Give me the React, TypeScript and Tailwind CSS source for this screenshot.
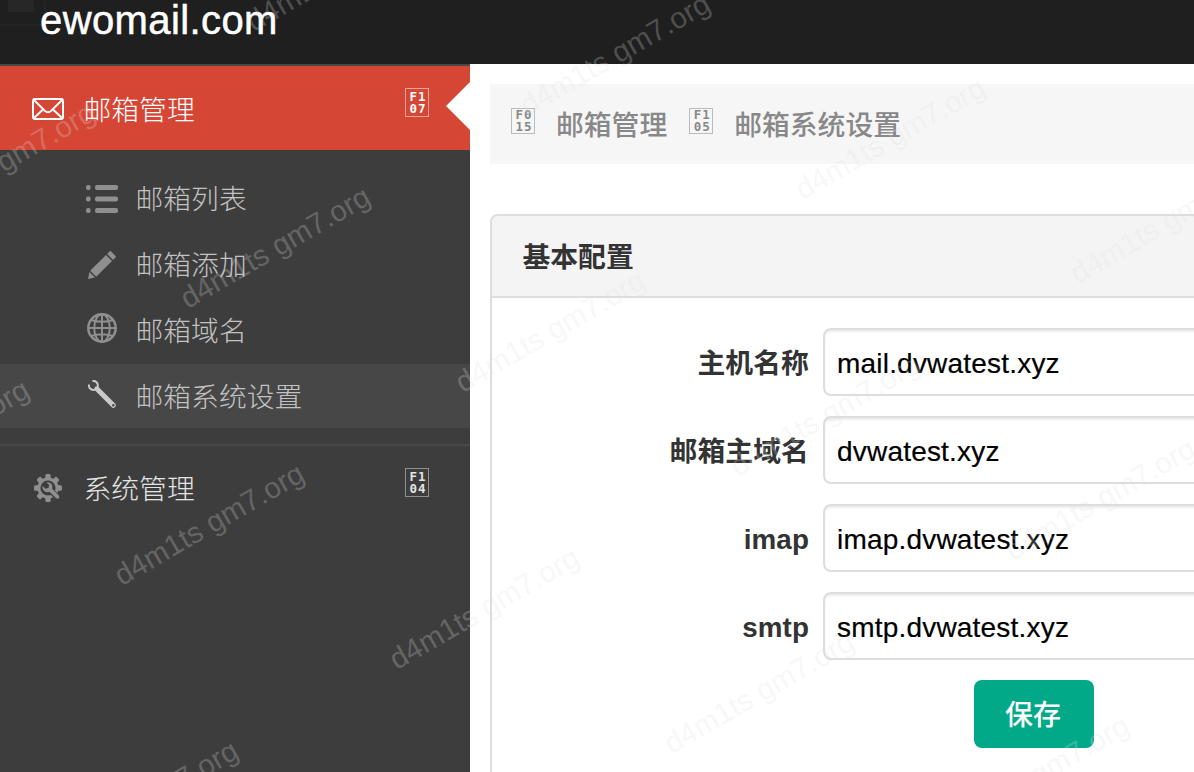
import type { ReactNode } from "react";

type HexProps = { top: string; bottom: string; className?: string };

function HexBox({ top, bottom, className = "" }: HexProps) {
  return (
    <span
      className={`flex w-6 shrink-0 flex-col items-center justify-center border pl-[2px] font-['DejaVu_Sans_Mono'] text-[12.5px] leading-[12px] font-bold tracking-[1px] ${className}`}
    >
      <span>{top}</span>
      <span>{bottom}</span>
    </span>
  );
}

function EnvelopeIcon() {
  return (
    <svg width="32" height="22" viewBox="0 0 32 22" fill="none" stroke="#fff" strokeWidth="2">
      <rect x="1" y="1" width="30" height="20" rx="2" />
      <path d="M2 2l11 11q3 2.400 6 0L30 2M2 20l9-8.500M30 20l-9-8.500" strokeWidth="1.900" />
    </svg>
  );
}

function ListIcon() {
  return (
    <svg width="32" height="28" viewBox="0 0 32 28" fill="#8f8f8f">
      {[0, 11.5, 23].map((y) => (
        <g key={y}>
          <rect x="0" y={y} width="4.600" height="5" rx="2" />
          <rect x="9" y={y} width="23" height="5" rx="2" />
        </g>
      ))}
    </svg>
  );
}

function PencilIcon() {
  return (
    <svg width="28" height="28" viewBox="0 0 28 28" fill="#8f8f8f">
      <path d="M21.500 .5Q22.300-.3 23.200.6L27.500 4.900Q28.300 5.700 27.500 6.500L25.100 8.900 19.100 2.900Z" />
      <path d="M18 4L24 10 8.200 25.800 2.200 19.800Z" />
      <path d="M1.400 21L7 26.500 0 28Z" />
    </svg>
  );
}

function GlobeIcon() {
  return (
    <svg width="30" height="30" viewBox="0 0 30 30" fill="none" stroke="#8f8f8f" strokeWidth="2">
      <circle cx="15" cy="15" r="13.700" strokeWidth="2.500" />
      <ellipse cx="15" cy="15" rx="7.800" ry="13.800" />
      <path d="M15 1v28M1 15h28M4 7q11 3.600 22 0M4 23q11-3.600 22 0" />
    </svg>
  );
}

function WrenchIcon() {
  return (
    <svg width="28" height="28" viewBox="0 0 28 28" fill="none" stroke="#c9c9c9">
      <path d="M.9 5.200A4.500 4.500 0 1 0 5.300 .9" strokeWidth="2" strokeLinecap="round" />
      <path d="M8.800 8.800L25.300 25.300" strokeWidth="5" strokeLinecap="round" />
      <circle cx="25.300" cy="25.300" r="1.200" fill="#474747" stroke="none" />
    </svg>
  );
}

function GearIcon() {
  return (
    <svg width="28" height="28" viewBox="0 0 28 28">
      <g fill="#8f8f8f">
        <circle cx="14" cy="14" r="10.600" />
        {[0, 45, 90, 135, 180, 225, 270, 315].map((a) => (
          <rect key={a} x="11.300" y="0" width="5.400" height="6" rx="1.500" transform={`rotate(${a} 14 14)`} />
        ))}
      </g>
      <circle cx="14" cy="14" r="7.600" fill="#3d3d3d" />
      <path d="M17 17L23.500 23.500" stroke="#3d3d3d" strokeWidth="6" strokeLinecap="round" />
      <path
        d="M12.300 8.300C16.500 7.300 19.500 11 18 14.600L25 21.700Q26.300 24.700 22.900 24.700L15.300 17.800C11.500 19.200 7.600 16 8.600 12L11.500 14.700 14.600 13.700 15.200 11Z"
        fill="#8f8f8f"
      />
    </svg>
  );
}

type SubItemProps = { icon: ReactNode; label: string; active?: boolean };

function SubItem({ icon, label, active }: SubItemProps) {
  return (
    <li className={`flex h-16 items-center pl-[84px] text-[#c2c2c2] ${active ? "bg-[#474747]" : ""}`}>
      <span className="flex w-9 items-center justify-center">{icon}</span>
      <span className="ml-[15.500px] pt-[3px] text-[27.8px] leading-10 font-light">{label}</span>
    </li>
  );
}

const fields = [
  { label: "主机名称", value: "mail.dvwatest.xyz" },
  { label: "邮箱主域名", value: "dvwatest.xyz" },
  { label: "imap", value: "imap.dvwatest.xyz" },
  { label: "smtp", value: "smtp.dvwatest.xyz" },
];

const marks = [
  [341, -31], [615, 53], [890, 137], [1165, 221],
  [0, 162], [275, 246], [550, 330], [825, 414], [1100, 498],
  [-66, 439], [209, 523], [484, 607], [759, 691], [1034, 775],
  [143, 800],
];

function Watermark() {
  return (
    <div className="pointer-events-none absolute inset-0 overflow-hidden">
      {marks.map(([x, y]) => (
        <span
          key={`${x},${y}`}
          className="absolute -translate-x-1/2 -translate-y-1/2 -rotate-30 text-[29.5px] leading-none whitespace-nowrap text-[#e0e0e0]/25"
          style={{ left: x, top: y + 1 }}
        >
          d4m1ts gm7.org
        </span>
      ))}
    </div>
  );
}

export default function App() {
  return (
    <div className="relative flex h-[772px] w-[1194px] flex-col overflow-hidden bg-white font-['Liberation_Sans','Noto_Sans_CJK_SC',sans-serif]">
      <header className="relative h-16 shrink-0 bg-[#1f1f1f]">
        <div className="absolute top-0 left-0 h-[26px] w-[46px] border-r-2 border-b-2 border-[#242424] pl-2">
          <div className="h-3 w-[26px] bg-[#272727]" />
        </div>
        <div className="relative pl-10 text-[40px] leading-10 tracking-[0.4px] text-white [-webkit-text-stroke:0.5px_#fff]">
          ewomail.com
        </div>
      </header>

      <div className="flex min-h-0 flex-1">
        <aside className="w-[470px] shrink-0 border-t-2 border-[#484848] bg-[#3d3d3d]">
          <div className="relative flex h-[84px] items-center bg-[#d64635] pr-[41px] pl-8 text-white">
            <span className="mt-0.5 w-8"><EnvelopeIcon /></span>
            <span className="ml-[19.500px] flex-1 pt-[5px] text-[27.8px] leading-10 font-light">邮箱管理</span>
            <HexBox top="F1" bottom="07" className="mb-[11px] h-[29px] border-white/50" />
            <svg className="absolute top-4 right-0" width="24" height="48" viewBox="0 0 24 48">
              <path d="M24 0v48L0 24z" fill="#fff" />
            </svg>
          </div>
          <ul className="flex flex-col gap-0.5 pt-4 pb-4">
            <SubItem icon={<span className="mt-[2px]"><ListIcon /></span>} label="邮箱列表" />
            <SubItem icon={<span className="mt-[2px]"><PencilIcon /></span>} label="邮箱添加" />
            <SubItem icon={<span className="mb-1"><GlobeIcon /></span>} label="邮箱域名" />
            <SubItem icon={<span className="mb-1"><WrenchIcon /></span>} label="邮箱系统设置" active />
          </ul>
          <div className="flex h-[86px] items-center border-t-2 border-[#484848] pr-[41px] pl-8 text-[#e4e4e4]">
            <span className="flex w-8 justify-center"><GearIcon /></span>
            <span className="ml-[19.500px] flex-1 pt-[4px] text-[27.8px] leading-10 font-light">系统管理</span>
            <HexBox top="F1" bottom="04" className="mb-[11px] h-[29px] border-[#8f8f8f]" />
          </div>
        </aside>

        <main className="min-w-0 flex-1 pt-5 pl-5">
          <nav className="flex h-20 items-center bg-[#f6f6f6] pl-[21px] text-[27.8px] font-medium text-[#888]">
            <HexBox top="F0" bottom="15" className="mb-[6px] h-[26px] border-[#bbb]" />
            <span className="ml-[21px] pt-[3px] leading-10">邮箱管理</span>
            <HexBox top="F1" bottom="05" className="mb-[6px] ml-[22px] h-[26px] border-[#bbb]" />
            <span className="ml-[21px] pt-[3px] leading-10">邮箱系统设置</span>
          </nav>

          <section className="mt-[50px] h-[700px] w-[1000px] overflow-hidden rounded-lg border-2 border-[#ddd]">
            <h2 className="flex h-[82px] items-center border-b-2 border-[#ddd] bg-[#f4f4f4] pt-[3px] pl-[30.500px] text-[27.8px] font-bold text-[#333]">
              基本配置
            </h2>
            <form className="flex flex-col gap-5 pt-[30px]">
              {fields.map((f) => (
                <div key={f.label} className="flex items-center">
                  <label className="w-[317px] shrink-0 pt-1 text-right text-[27.8px] leading-10 font-bold tracking-[0.1px] text-[#333]">{f.label}</label>
                  <div className="ml-[14px] flex h-[68px] w-[500px] shrink-0 items-center rounded-lg border-2 border-[#ddd] bg-white pt-1 pl-3 text-[28px] tracking-[0.2px] text-black shadow-[inset_0_2px_2px_rgba(0,0,0,0.075)] [-webkit-text-stroke:0.2px_#000]">
                    {f.value}
                  </div>
                </div>
              ))}
              <button
                type="button"
                className="ml-[482px] flex h-[68px] w-[120px] items-center justify-center rounded-lg bg-[#02a988] pt-1 pr-0.5 text-[28px] font-medium text-white"
              >
                保存
              </button>
            </form>
          </section>
        </main>
      </div>
      <Watermark />
    </div>
  );
}
